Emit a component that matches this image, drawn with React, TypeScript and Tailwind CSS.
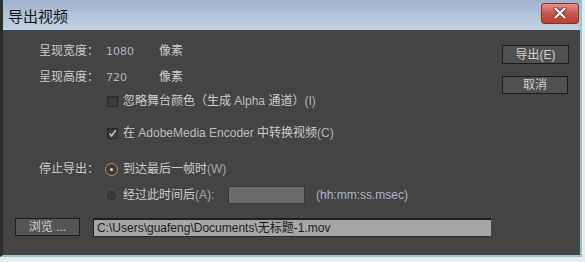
import React from "react";

const cjk = { fontFamily: '"Noto Sans CJK SC", "Liberation Sans", sans-serif' };
const mixed = { fontFamily: '"Liberation Sans", "Noto Sans CJK SC", sans-serif' };

const Checkbox = ({ checked }: { checked?: boolean }) => (
  <span className="w-[11px] h-[11px] border border-[#2a2a2a] bg-[#3c3c3c] shadow-[inset_1px_1px_0_#333] flex items-center justify-center shrink-0">
    {checked && (
      <svg width="11" height="11" viewBox="0 0 11 11">
        <path d="M2 5.5 L4.5 8.5 L9.5 1.5" stroke="#d8d8d8" strokeWidth="1.6" fill="none" />
      </svg>
    )}
  </span>
);

const Radio = ({ checked }: { checked?: boolean }) => (
  <span
    className={
      "w-[13px] h-[13px] rounded-full flex items-center justify-center shrink-0 " +
      (checked ? "border border-[#c89a3a] bg-[#3a3a3a]" : "border border-[#555] bg-[#383838]")
    }
  >
    {checked && <span className="w-[3px] h-[3px] rounded-full bg-[#d8d8d8]" />}
  </span>
);

export default function App() {
  return (
    <div className="w-[585px] h-[262px] bg-[#e8ecef] overflow-hidden" style={cjk}>
      <div className="w-[582px] h-[257px] flex flex-col border-l-[3px] border-[#2e2e2e] border-r-2 border-r-[#9cc4cc] border-b-2 border-b-[#9cc4cc]">
        {/* title bar */}
        <div className="h-[30px] shrink-0 flex items-center justify-between bg-gradient-to-b from-[#9fb2ca] to-[#c4d4e6] pl-[5px] pr-[1px]">
          <span className="text-[15px] text-[#151515] leading-none">导出视频</span>
          <div className="w-[38px] h-[21px] mb-[4px] rounded-[3px] border border-[#7a3a34] bg-gradient-to-b from-[#e0948a] via-[#c9574a] to-[#b8402f] flex items-center justify-center">
            <svg width="14" height="12" viewBox="0 0 14 12">
              <path d="M2.5 1.5 L11.5 10.5 M11.5 1.5 L2.5 10.5" stroke="#6a2a24" strokeWidth="4" strokeLinecap="round" />
              <path d="M2.5 1.5 L11.5 10.5 M11.5 1.5 L2.5 10.5" stroke="#ffffff" strokeWidth="2.4" strokeLinecap="round" />
            </svg>
          </div>
        </div>

        {/* body */}
        <div className="flex-1 bg-[#444444] flex text-[12px] text-[#cdcdcd] leading-none" style={mixed}>
          <div className="flex-1 flex flex-col pt-[11px]">
            <div className="h-[20px] flex items-center pl-[36px]">
              <span className="w-[67px]">呈现宽度：</span>
              <span className="w-[53px] text-[#aeb6c2] text-[11px]" style={{ fontFamily: '"DejaVu Sans", sans-serif' }}>1080</span>
              <span>像素</span>
            </div>
            <div className="h-[20px] mt-[6px] flex items-center pl-[36px]">
              <span className="w-[67px]">呈现高度：</span>
              <span className="w-[53px] text-[#aeb6c2] text-[11px]" style={{ fontFamily: '"DejaVu Sans", sans-serif' }}>720</span>
              <span>像素</span>
            </div>
            <div className="h-[20px] mt-[4px] flex items-center pl-[104px] gap-[5px]">
              <Checkbox />
              <span>
                忽略舞台颜色（生成 <span className="text-[#bcbcbc]">Alpha</span> 通道）<span className="text-[#b4b4b4]">(I)</span>
              </span>
            </div>
            <div className="h-[20px] mt-[12px] flex items-center pl-[104px] gap-[5px]">
              <Checkbox checked />
              <span>
                在 <span className="text-[#bcbcbc]">AdobeMedia Encoder</span> 中转换视频<span className="text-[#b4b4b4]">(C)</span>
              </span>
            </div>
            <div className="h-[20px] mt-[16px] flex items-center pl-[36px]">
              <span className="w-[66px]">停止导出：</span>
              <Radio checked />
              <span className="ml-[5px]">
                到达最后一帧时<span className="text-[#a8a8a8]">(W)</span>
              </span>
            </div>
            <div className="h-[20px] mt-[6px] flex items-center pl-[102px]">
              <Radio />
              <span className="ml-[5px] w-[105px]">
                经过此时间后<span className="text-[#a8a8a8]">(A):</span>
              </span>
              <span className="w-[77px] h-[18px] bg-[#6b6b6b] border border-[#393939]" />
              <span className="ml-[11px] text-[#aab6c6]">(hh:mm:ss.msec)</span>
            </div>
            <div className="h-[20px] mt-[12px] flex items-center pl-[12px]">
              <button className="w-[65px] h-[18px] bg-[#555555] border border-[#1e1e1e] text-[#d0d0d0] text-[12px] flex items-center justify-center leading-none">
                浏览 ...
              </button>
              <div className="ml-[13px] w-[398px] h-[19px] bg-[#a6a6a6] border-t-2 border-l border-[#1e1e1e] border-b border-b-[#2a2a2a] text-[#1c1c1c] flex items-center pl-[3px]">
                C:\Users\guafeng\Documents\无标题-1.mov
              </div>
            </div>
          </div>

          {/* right buttons */}
          <div className="w-[78px] shrink-0 flex flex-col pt-[15px]">
            <button className="w-[67px] h-[19px] bg-[#505050] border border-[#1c1c1c] text-[#d0d0d0] text-[12px] leading-none flex items-center justify-center">
              导出(E)
            </button>
            <button className="w-[66px] h-[18px] mt-[12px] bg-[#505050] border border-[#1c1c1c] text-[#d0d0d0] text-[12px] leading-none flex items-center justify-center">
              取消
            </button>
          </div>
        </div>
      </div>
    </div>
  );
}
